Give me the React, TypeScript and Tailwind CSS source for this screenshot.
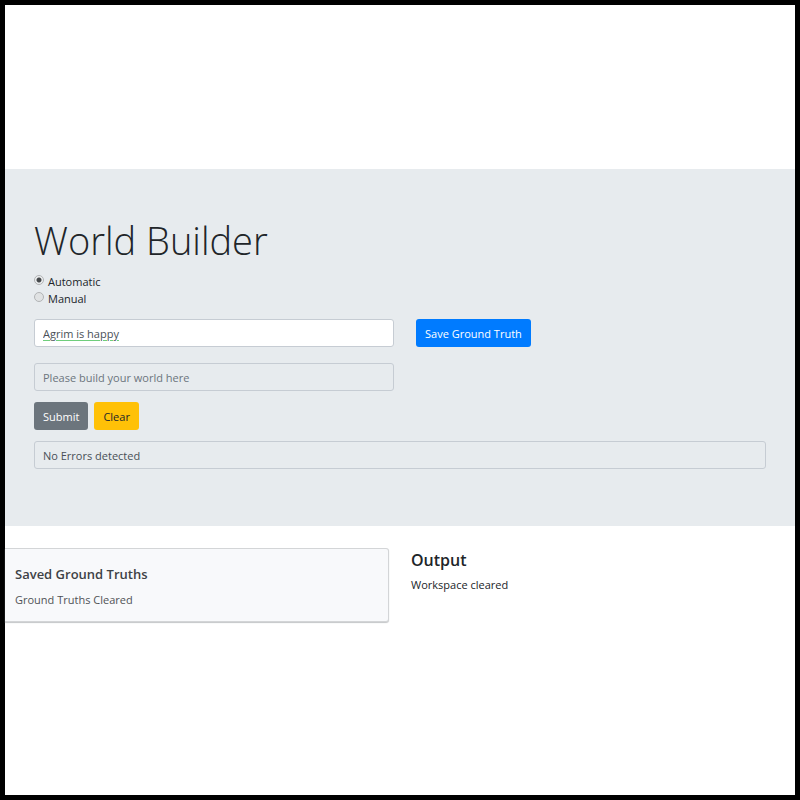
import { useState } from "react";

const radio =
  "mt-[2px] size-[10px] shrink-0 appearance-none rounded-full border border-[#b2b4b6] bg-[#e0e2e3] checked:bg-[radial-gradient(circle,#45484b_0_2px,#eceeef_3px)]";
const field =
  "block h-7 w-full rounded-[3px] border border-[#c6ccd3] px-2 text-[#495057] outline-none placeholder:text-[#6c757d] placeholder:opacity-100";
const button = "h-7 rounded-[3px] px-[9px]";

export default function App() {
  const [mode, setMode] = useState("automatic");
  const [truth, setTruth] = useState("Agrim is happy");

  return (
    <div className="min-h-screen border-5 border-black bg-white pt-[164px] font-['Open_Sans','Noto_Sans',sans-serif] text-[11px] leading-[17px] text-[#212529]">
      <header className="bg-[#e7ebee] px-[29px] pt-[47px] pb-[57px]">
        <h1 className="text-[38px] leading-[48px] font-light">World Builder</h1>
        <div className="mt-[9px] mb-3">
          <label className="flex gap-1">
            <input
              type="radio"
              name="mode"
              className={radio}
              checked={mode === "automatic"}
              onChange={() => setMode("automatic")}
            />
            Automatic
          </label>
          <label className="flex gap-1">
            <input
              type="radio"
              name="mode"
              className={radio}
              checked={mode === "manual"}
              onChange={() => setMode("manual")}
            />
            Manual
          </label>
        </div>
        <div className="grid grid-cols-[36fr_35fr] gap-x-[22px] gap-y-4">
          <input
            aria-label="Ground truth"
            className={`${field} bg-white underline decoration-[#6fce7c] decoration-1 underline-offset-2`}
            value={truth}
            onChange={(e) => setTruth(e.target.value)}
          />
          <div>
            <button type="button" className={`${button} bg-[#007bff] text-white`}>
              Save Ground Truth
            </button>
          </div>
          <input
            aria-label="World"
            className={`${field} bg-[#e7ebee]`}
            placeholder="Please build your world here"
          />
        </div>
        <div className="my-[11px] flex gap-1.5">
          <button type="button" className={`${button} bg-[#6c757d] text-white`}>
            Submit
          </button>
          <button type="button" className={`${button} bg-[#ffc107]`}>
            Clear
          </button>
        </div>
        <input aria-label="Errors" className={`${field} bg-[#e7ebee]`} value="No Errors detected" readOnly />
      </header>
      <main className="mt-[22px] grid grid-cols-[384fr_384fr] gap-[22px]">
        <section className="rounded-r-[3px] border border-l-0 border-[#d3d5d7] bg-[#f8f9fb] px-2.5 pt-4 pb-[13px] text-[#505356] shadow-[0_1px_1px_#c4c6c8]">
          <h2 className="text-[13px] leading-[18px] font-semibold text-[#3e4246]">Saved Ground Truths</h2>
          <p className="mt-2">Ground Truths Cleared</p>
        </section>
        <section>
          <h2 className="text-[16px] leading-[24px] font-semibold">Output</h2>
          <p className="mt-1">Workspace cleared</p>
        </section>
      </main>
    </div>
  );
}
